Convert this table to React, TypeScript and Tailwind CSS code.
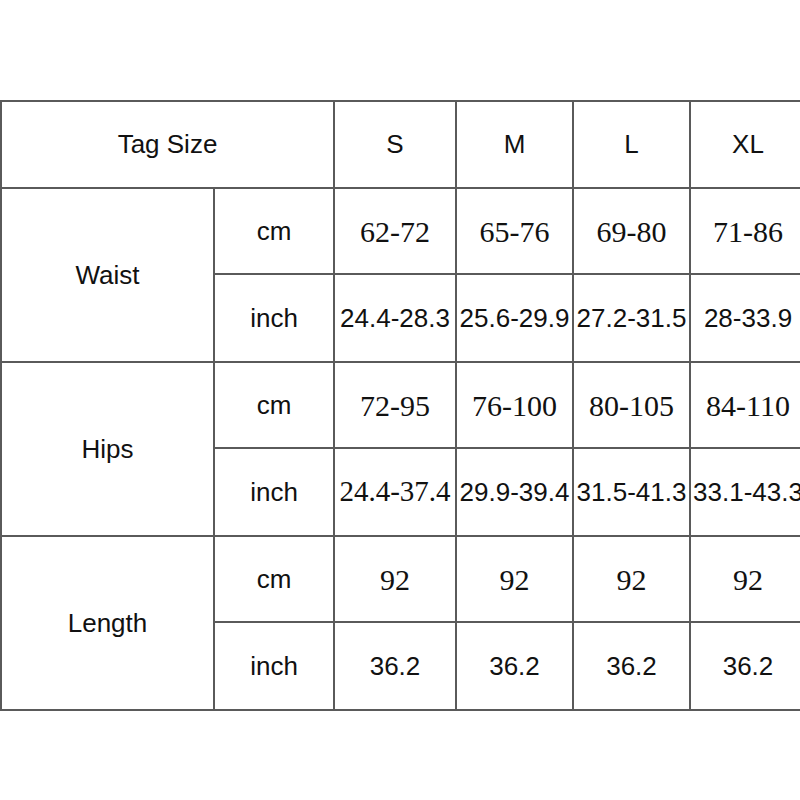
import React from "react";

const sans = "font-['Liberation_Sans',Arial,sans-serif]";
const serif = "font-['Liberation_Serif','Times_New_Roman',serif]";

type Cell = { t: string; serif?: boolean; size?: string };

const rows: { label: string; cm: Cell[]; inch: Cell[] }[] = [
  {
    label: "Waist",
    cm: [
      { t: "62-72", serif: true },
      { t: "65-76", serif: true },
      { t: "69-80", serif: true },
      { t: "71-86", serif: true },
    ],
    inch: [{ t: "24.4-28.3" }, { t: "25.6-29.9" }, { t: "27.2-31.5" }, { t: "28-33.9" }],
  },
  {
    label: "Hips",
    cm: [
      { t: "72-95", serif: true },
      { t: "76-100", serif: true },
      { t: "80-105", serif: true },
      { t: "84-110", serif: true },
    ],
    inch: [
      { t: "24.4-37.4", serif: true, size: "text-[29px]" },
      { t: "29.9-39.4" },
      { t: "31.5-41.3" },
      { t: "33.1-43.3" },
    ],
  },
  {
    label: "Length",
    cm: [
      { t: "92", serif: true },
      { t: "92", serif: true },
      { t: "92", serif: true },
      { t: "92", serif: true },
    ],
    inch: [{ t: "36.2" }, { t: "36.2" }, { t: "36.2" }, { t: "36.2" }],
  },
];

const cellBase =
  "flex items-center justify-center border-r-2 border-b-2 border-[#5a5a5a] text-[#111] whitespace-nowrap overflow-visible";

function Val({ c }: { c: Cell }) {
  return (
    <div
      className={`${cellBase} ${c.serif ? serif : sans} ${
        c.size ?? (c.serif ? "text-[30px]" : "text-[26px]")
      }`}
    >
      {c.t}
    </div>
  );
}

export default function App() {
  return (
    <div className="w-[800px] h-[800px] bg-white overflow-hidden pt-[100px]">
      <div className="grid grid-cols-[213px_120px_122px_117px_117px_116px] grid-rows-[87px_86px_88px_86px_88px_86px_88px] border-l-2 border-t-2 border-[#5a5a5a] w-max">
        <div className={`${cellBase} ${sans} text-[26px] col-span-2`}>Tag Size</div>
        {["S", "M", "L", "XL"].map((s) => (
          <div key={s} className={`${cellBase} ${sans} text-[26px]`}>
            {s}
          </div>
        ))}
        {rows.map((r) => (
          <React.Fragment key={r.label}>
            <div className={`${cellBase} ${sans} text-[26px] row-span-2`}>{r.label}</div>
            <div className={`${cellBase} ${sans} text-[26px]`}>cm</div>
            {r.cm.map((c, i) => (
              <Val key={"c" + i} c={c} />
            ))}
            <div className={`${cellBase} ${sans} text-[26px]`}>inch</div>
            {r.inch.map((c, i) => (
              <Val key={"i" + i} c={c} />
            ))}
          </React.Fragment>
        ))}
      </div>
    </div>
  );
}
